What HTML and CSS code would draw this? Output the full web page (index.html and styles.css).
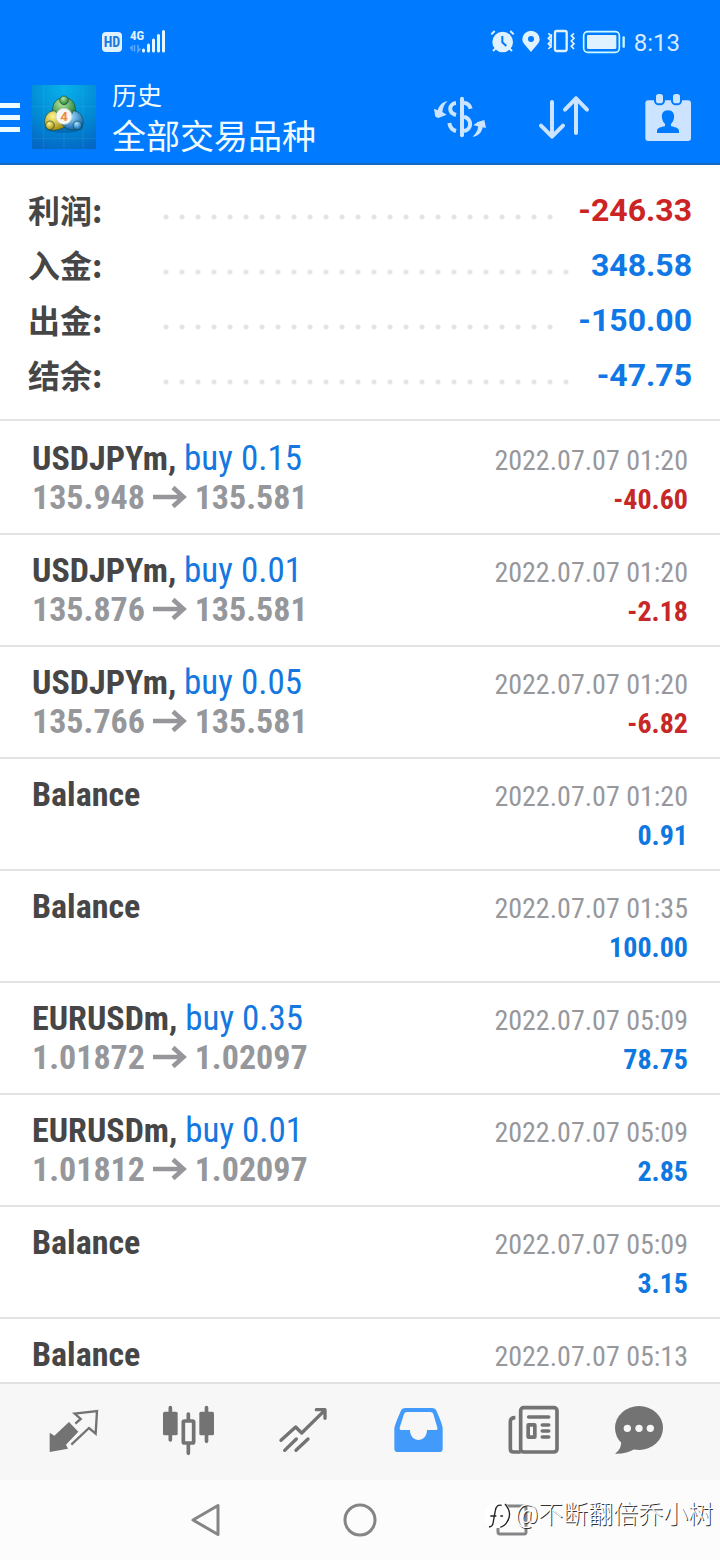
FILE: index.html
```
<!DOCTYPE html>
<html lang="zh-CN">
<head>
<meta charset="utf-8">
<meta name="viewport" content="width=device-width, initial-scale=1">
<title>历史</title>
<link rel="stylesheet" href="styles.css">
</head>
<body>
<div class="app">
  <header class="header">
    <div class="status">
      <div class="status-group">
        <span class="hd">HD</span>
        <svg class="signal" viewBox="130 28 36 28" aria-hidden="true">
          <text x="130" y="40" class="net">4G</text>
          <path d="M132 51v-4.500l-2 2M134.500 45v6.500M138 45v6.500l2.500-3" stroke="#5cabff" stroke-width="1.500" fill="none"/>
          <path d="M143.500 51v-1M148.500 51v-6M153.500 51v-11M158.500 51v-15.500M163.500 51v-19.500" stroke="#e8f8ff" stroke-width="3" stroke-linecap="round"/>
        </svg>
      </div>
      <div class="status-group">
        <svg class="sys" viewBox="390 84 408 84" aria-hidden="true">
          <g fill="#e0f1ff" stroke="#e0f1ff">
            <circle cx="428" cy="126" r="31" stroke="none"/>
            <path d="M394 103l10-10M451 93l10 10M399 153l8-8M456 153l-8-8" stroke-width="6" fill="none"/>
            <path d="M427 108v19l12 11" stroke="#007aff" stroke-width="6" fill="none"/>
            <path d="M513 156C500 140 487 130 487 118a26 26 0 0 1 52 0C539 130 526 140 513 156Z" stroke="none"/>
            <circle cx="513" cy="117" r="9" fill="#007aff" stroke="none"/>
            <rect x="585" y="93" width="35" height="60" rx="5" fill="none" stroke-width="7"/>
            <path d="M565 100l8 7-8 8 8 8-8 8 8 8-8 8M574 103l-1 40M642 100l-8 7 8 8-8 8 8 8-8 8 8 8" fill="none" stroke-width="5"/>
            <rect x="671" y="95" width="107" height="62" rx="12" fill="none" stroke="#c9fbff" stroke-width="5"/>
            <rect x="681" y="105" width="88" height="42" rx="4" stroke="none"/>
            <path d="M791 112v28" stroke="#c9fbff" stroke-width="7" stroke-linecap="round"/>
          </g>
        </svg>
        <time class="clock">8:13</time>
      </div>
    </div>
    <div class="toolbar">
      <button class="menu" aria-label="菜单"><span></span><span></span><span></span></button>
      <svg class="logo" viewBox="18 15 192 192" aria-hidden="true">
        <defs>
          <radialGradient id="sky" cx="50%" cy="5%" r="100%"><stop offset="0" stop-color="#08b0ea"/><stop offset=".6" stop-color="#0289d4"/><stop offset="1" stop-color="#0467c4"/></radialGradient>
          <radialGradient id="gr" cx="40%" cy="30%" r="70%"><stop offset="0" stop-color="#b4e69c"/><stop offset="1" stop-color="#237f38"/></radialGradient>
          <radialGradient id="ye" cx="40%" cy="30%" r="70%"><stop offset="0" stop-color="#fff58c"/><stop offset="1" stop-color="#a58d12"/></radialGradient>
          <radialGradient id="bl" cx="40%" cy="30%" r="70%"><stop offset="0" stop-color="#a5e2ff"/><stop offset="1" stop-color="#1164b4"/></radialGradient>
        </defs>
        <rect x="18" y="15" width="192" height="192" fill="url(#sky)"/>
        <path d="M53 15v192M114 15v192M171 15v192M18 80h192M18 176h192" stroke="#5ccaf5" stroke-opacity=".25" stroke-width="2"/>
        <ellipse cx="114" cy="143" rx="58" ry="16" fill="#034e92" opacity=".45"/>
        <g stroke="#1b4b38" stroke-width="2">
          <path d="M80 104C76 72 90 53 114 53s38 19 34 50l-14 10-38-2Z" fill="url(#gr)"/>
          <path d="M86 92C62 93 52 115 57 137c8 20 38 16 61 3l-8-22Z" fill="url(#ye)"/>
          <path d="M141 92c25 2 35 25 29 46-15 20-50 14-65-8l25-6Z" fill="url(#bl)"/>
          <circle cx="114" cy="61" r="13" fill="url(#gr)"/>
          <circle cx="72" cy="136" r="13" fill="url(#ye)"/>
          <circle cx="154" cy="136" r="13" fill="url(#bl)"/>
        </g>
        <circle cx="114" cy="109" r="24" fill="#f6f7f4" stroke="#c7cfc4" stroke-width="2"/>
        <text x="114" y="123" class="four">4</text>
      </svg>
      <div class="titles">
        <h1>历史</h1>
        <p>全部交易品种</p>
      </div>
      <div class="actions">
        <button aria-label="货币">
          <svg viewBox="27 15 156 156" aria-hidden="true">
            <g fill="#cce4ff"><path d="M68 45C52 48 42 58 38 73L27 68l4 24 9 4 25-10-13-8C54 64 58 54 68 45Z"/>
            <path d="M143 153C155 140 159 131 159 121l-14-3 13-10 20-6 5 24-10-2C170 140 160 150 143 153Z"/></g>
            <g fill="none" stroke="#cce4ff" stroke-width="12"><path d="M111 38v110" stroke-linecap="round"/>
            <path d="M93 51C72 53 68 80 93 87M73 111C75 124 82 132 93 135M117 50C128 51 134 57 137 68M117 92C142 100 141 131 117 135"/></g>
          </svg>
        </button>
        <button aria-label="排序">
          <svg viewBox="534 270 156 156" aria-hidden="true"><path d="M576 303v103M543 374l33 33 33-33M648 396V292M615 326l33-34 33 34" fill="none" stroke="#cce4ff" stroke-width="12" stroke-linecap="round" stroke-linejoin="round"/></svg>
        </button>
        <button aria-label="日期">
          <svg viewBox="846 270 156 156" aria-hidden="true">
            <rect x="856" y="298" width="137" height="122" rx="9" fill="#cce4ff"/>
            <g fill="#cce4ff" stroke="#007aff" stroke-width="6"><rect x="885" y="276" width="27" height="34" rx="11"/><rect x="936" y="276" width="27" height="34" rx="11"/></g>
            <path d="M924 328c14 0 20 10 18 23-1 8-5 14-9 18v6c10 4 24 4 24 15v6h-66v-6c0-11 14-11 24-15v-6c-4-4-8-10-9-18-2-13 4-23 18-23Z" fill="#007aff"/>
          </svg>
        </button>
      </div>
    </div>
  </header>

  <dl class="summary">
    <div class="sum-row"><dt>利润:</dt><dd class="neg">-246.33</dd></div>
    <div class="sum-row"><dt>入金:</dt><dd>348.58</dd></div>
    <div class="sum-row"><dt>出金:</dt><dd>-150.00</dd></div>
    <div class="sum-row"><dt>结余:</dt><dd>-47.75</dd></div>
  </dl>

  <svg class="defs" aria-hidden="true"><symbol id="arrow" viewBox="0 0 34 24"><path d="M0 12h30M20 2.500l10.500 9.500L20 21.500" fill="none" stroke="#96979b" stroke-width="4.500"/></symbol></svg>

  <ul class="deals">
    <li><div class="line"><span class="name">USDJPYm, <span class="side">buy 0.15</span></span><time>2022.07.07 01:20</time></div><div class="line"><span class="price">135.948 <svg role="img" aria-label="→"><use href="#arrow"/></svg> 135.581</span><span class="sum neg">-40.60</span></div></li>
    <li><div class="line"><span class="name">USDJPYm, <span class="side">buy 0.01</span></span><time>2022.07.07 01:20</time></div><div class="line"><span class="price">135.876 <svg role="img" aria-label="→"><use href="#arrow"/></svg> 135.581</span><span class="sum neg">-2.18</span></div></li>
    <li><div class="line"><span class="name">USDJPYm, <span class="side">buy 0.05</span></span><time>2022.07.07 01:20</time></div><div class="line"><span class="price">135.766 <svg role="img" aria-label="→"><use href="#arrow"/></svg> 135.581</span><span class="sum neg">-6.82</span></div></li>
    <li><div class="line"><span class="name">Balance</span><time>2022.07.07 01:20</time></div><div class="line"><span class="sum">0.91</span></div></li>
    <li><div class="line"><span class="name">Balance</span><time>2022.07.07 01:35</time></div><div class="line"><span class="sum">100.00</span></div></li>
    <li><div class="line"><span class="name">EURUSDm, <span class="side">buy 0.35</span></span><time>2022.07.07 05:09</time></div><div class="line"><span class="price">1.01872 <svg role="img" aria-label="→"><use href="#arrow"/></svg> 1.02097</span><span class="sum">78.75</span></div></li>
    <li><div class="line"><span class="name">EURUSDm, <span class="side">buy 0.01</span></span><time>2022.07.07 05:09</time></div><div class="line"><span class="price">1.01812 <svg role="img" aria-label="→"><use href="#arrow"/></svg> 1.02097</span><span class="sum">2.85</span></div></li>
    <li><div class="line"><span class="name">Balance</span><time>2022.07.07 05:09</time></div><div class="line"><span class="sum">3.15</span></div></li>
    <li><div class="line"><span class="name">Balance</span><time>2022.07.07 05:13</time></div></li>
  </ul>

  <nav class="tabs">
    <button aria-label="行情"><svg viewBox="132 102 171 168" aria-hidden="true"><path d="M149 188l14 9 44-41 28 29-37 39 6 12-55 10Z" fill="#737373"/><path d="M226 161l16-14-18-16 67-8-4 68-20-17-53 50" fill="none" stroke="#737373" stroke-width="7"/></svg></button>
    <button aria-label="图表"><svg viewBox="477 102 171 168" aria-hidden="true"><g fill="#737373"><rect x="489" y="125" width="44" height="71" rx="5"/><rect x="598" y="125" width="44" height="71" rx="5"/></g><path d="M511 113v97M619.500 113v101M565 132v18M565 222v28" stroke="#737373" stroke-width="11" stroke-linecap="round"/><rect x="550" y="153" width="31" height="66" rx="3" fill="none" stroke="#737373" stroke-width="11"/></svg></button>
    <button aria-label="交易"><svg viewBox="822 102 171 168" aria-hidden="true"><path d="M843 211l44-40 18 18 69-68M949 119h26v26M854 241l35-34M888 241l36-34" fill="none" stroke="#737373" stroke-width="10" stroke-linecap="round" stroke-linejoin="round"/></svg></button>
    <button aria-label="历史" aria-current="page"><svg viewBox="87 102 171 168" aria-hidden="true"><path fill="#429bfb" fill-rule="evenodd" d="M103 236V175Q104 165 122 124 126 114 136 114H216Q226 114 230 124 248 165 248 175V236Q248 246 238 246H113Q103 246 103 236ZM141 126Q134 126 132 132L119 173Q118 180 125 180H150C150 220 201 220 201 180H227Q234 180 232 173L220 132Q218 126 211 126Z"/></svg></button>
    <button aria-label="新闻"><svg viewBox="432 102 171 168" aria-hidden="true"><g fill="none" stroke="#737373" stroke-width="11"><rect x="482" y="113" width="109" height="133" rx="9"/><path d="M466 143Q451 143 451 155V236Q451 246 461 246H482"/><path d="M506 141h60M547 165h19M547 183h19M547 201h19" stroke-linecap="round"/><rect x="504.500" y="164.500" width="20" height="37" rx="1"/></g></svg></button>
    <button aria-label="聊天"><svg viewBox="777 102 171 168" aria-hidden="true"><ellipse cx="837" cy="174" rx="72" ry="66" fill="#737373"/><path d="M783 210Q787 235 765 251 800 252 825 236Z" fill="#737373"/><g fill="#f7f7f7"><circle cx="802" cy="175" r="11"/><circle cx="837" cy="175" r="11"/><circle cx="871" cy="175" r="11"/></g></svg></button>
  </nav>

  <footer class="sysnav">
    <button aria-label="返回"><svg viewBox="0 0 32 32"><path d="M28 1.500v29L3 16Z"/></svg></button>
    <button aria-label="主页"><svg viewBox="0 0 32 32"><circle cx="16" cy="16" r="15"/></svg></button>
    <button aria-label="最近"><svg viewBox="0 0 32 32"><rect x="0" y="2" width="28" height="28" rx="2"/></svg></button>
    <div class="mark">
      <svg viewBox="8 30 78 90" aria-hidden="true"><rect x="8" y="38" width="76" height="76" rx="30" fill="#fff"/><path d="M58 46q-16-4-19 16l-7 38q-2 10-12 11M24 78h18M54 78h8M68 42q24 28 6 54-6 12-20 16" fill="none" stroke="#222" stroke-width="4"/></svg>
      <span>@不断翻倍乔小树</span>
    </div>
  </footer>
</div>
</body>
</html>
```
FILE: styles.css
```
* { box-sizing: border-box; margin: 0; padding: 0; }
body { background: #fff; font-family: Roboto, "Noto Sans CJK SC", sans-serif; }
button { border: 0; background: none; display: block; cursor: pointer; }
svg { display: block; overflow: visible; }
.defs { width: 0; height: 0; position: absolute; }

.app { height: 100vh; display: flex; flex-direction: column; overflow: hidden; }

.header { flex: none; background: #007aff; border-bottom: 2px solid #1668bd; padding-top: 28px; color: #f0fbff; }
.status { display: flex; justify-content: space-between; height: 28px; padding: 0 40px 0 102px; }
.status-group { display: flex; align-items: center; gap: 8px; }
.hd { width: 20px; height: 20px; border-radius: 4px; background: #e0f1ff; color: #1a7ae0; font: 700 14px/20px "Roboto Condensed", sans-serif; text-align: center; }
.signal { width: 36px; height: 28px; }
.net { font: 700 13px "Roboto Condensed", sans-serif; fill: #e0f1ff; }
.sys { width: 136px; height: 28px; }
.clock { padding-top: 2px; font-size: 24px; line-height: 28px; color: #d8eaff; }

.toolbar { display: flex; align-items: center; padding: 21px 26px 6px 0; }
.menu { width: 20px; display: grid; gap: 7px; }
.menu span { height: 5px; background: #effcff; }
.logo { width: 64px; height: 64px; margin-left: 12px; }
.four { font: 700 40px Roboto, sans-serif; fill: #f08a3c; text-anchor: middle; }
.titles { flex: 1; margin-left: 16px; line-height: 40px; white-space: nowrap; }
.titles h1 { font-size: 25px; font-weight: 400; line-height: 40px; }
.titles p { font-size: 34px; }
.actions { display: flex; gap: 52px; }
.actions svg { width: 52px; height: 52px; }

.summary { flex: none; padding: 18px 28px 16px; border-bottom: 2px solid #e3e3e3; font-size: 32px; font-weight: 700; line-height: 55px; }
.sum-row { display: flex; }
.sum-row dt { width: 130px; color: #464646; font-family: "Noto Sans CJK SC", sans-serif; line-height: 52px; }
.sum-row dd { display: flex; flex: 1; gap: 22px; color: #0f78e6; }
.sum-row dd::before { content: ""; flex: 1; background: radial-gradient(circle at 8px 34px, #e4e4e4 2px, transparent 3px) 0 0 / 16px 55px; }
.neg, .sum-row dd.neg { color: #cc2424; }

.deals { flex: 1; min-height: 0; overflow: hidden; padding-top: 2px; list-style: none; font-family: "Roboto Condensed", Roboto, sans-serif; }
.deals li { height: 112px; padding: 16px 32px 0; border-bottom: 2px solid #e3e3e3; }
.line { display: flex; align-items: baseline; justify-content: space-between; height: 39px; line-height: 39px; white-space: nowrap; }
.name { font-size: 34px; font-weight: 700; color: #464646; }
.side { font-size: 35px; font-weight: 400; color: #1478e0; }
.price { font-size: 34px; font-weight: 700; color: #96979b; }
.price svg { display: inline-block; width: 34px; height: 24px; }
.line time { font-size: 28px; color: #97989c; }
.sum { margin-left: auto; font-size: 28px; font-weight: 700; color: #0f78e0; }
.sum:first-child { padding-top: 2px; }
.sum.neg { color: #c62828; }

.tabs { flex: none; display: flex; align-items: center; height: 98px; padding: 0 15px; border-top: 2px solid #e1e1e1; background: #f7f7f7; }
.tabs button { flex: 1; display: flex; justify-content: center; }
.tabs svg { width: 57px; height: 56px; }

.sysnav { flex: none; position: relative; display: flex; align-items: center; justify-content: center; gap: 122px; height: 80px; background: #fcfcfc; }
.sysnav button svg { width: 32px; height: 32px; fill: none; stroke: #858585; stroke-width: 3; stroke-linejoin: round; }
.mark { position: absolute; right: 7px; top: 16px; display: flex; align-items: center; gap: 4px; color: #fff; font: 300 25px/38px Roboto, "Noto Sans CJK SC", sans-serif; text-shadow: 1px 1px 0 #333; white-space: nowrap; }
.mark svg { width: 26px; height: 30px; }
```
